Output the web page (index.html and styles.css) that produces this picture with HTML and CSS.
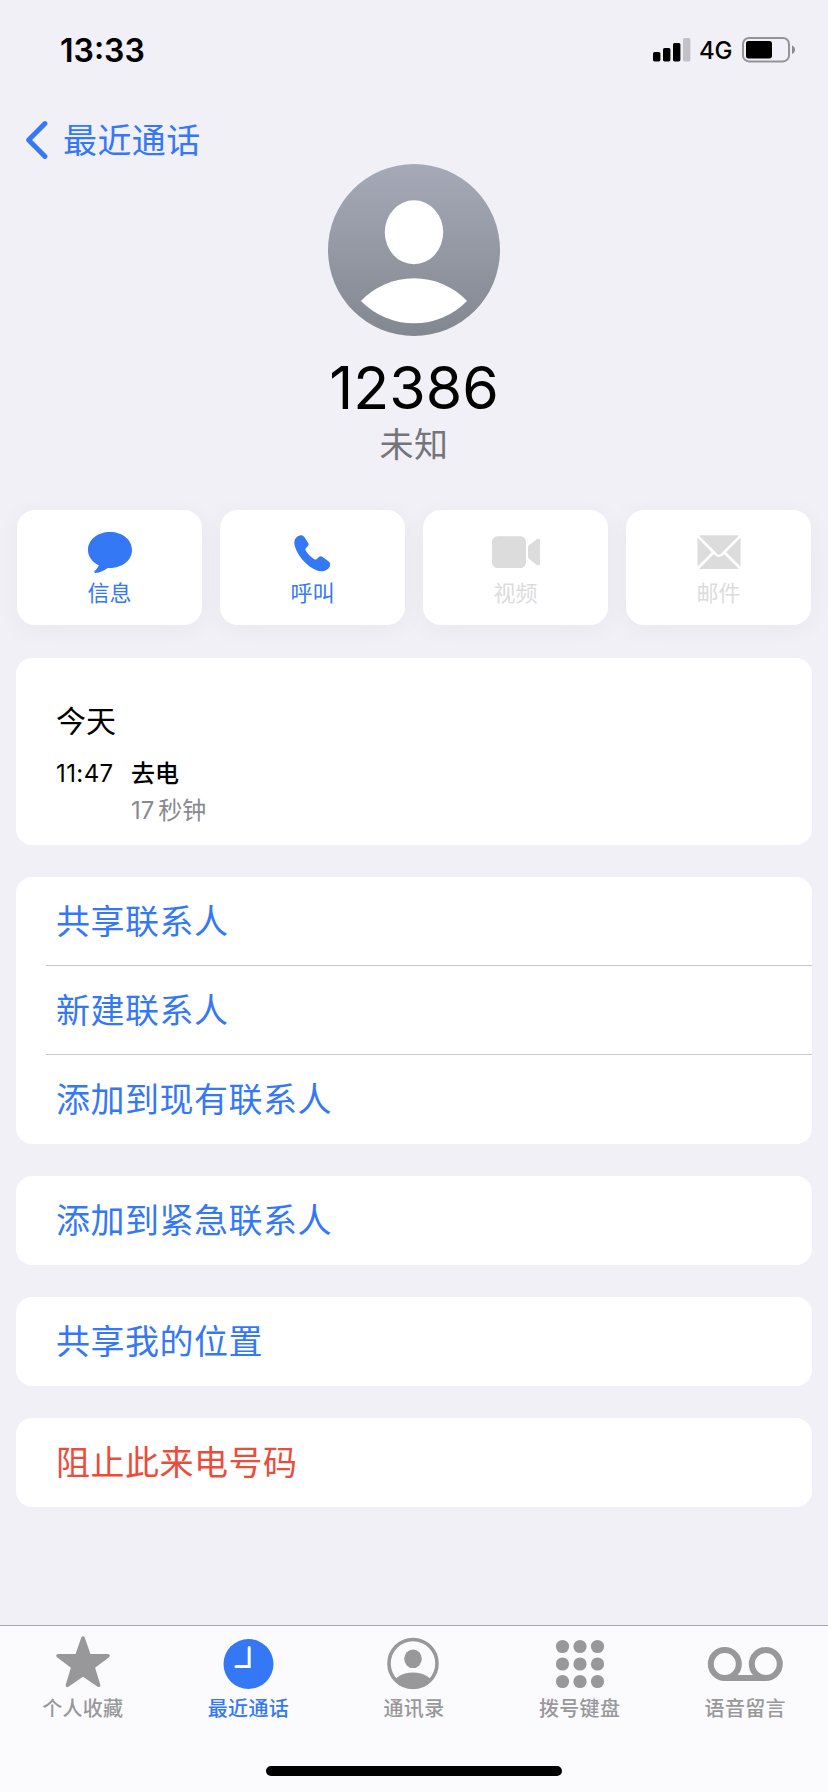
FILE: index.html
```
<!DOCTYPE html>
<html lang="zh-CN">
<head>
    <meta charset="UTF-8">
    <meta name="viewport" content="width=device-width, initial-scale=1.0">
    <title>最近通话</title>
    <link rel="stylesheet" href="styles.css">
</head>
<body>

    <header class="status-bar">
        <span class="time">13:33</span>
        <div class="status-right">
            <svg class="signal" width="38" height="24" viewBox="0 0 38 24">
                <rect x="0" y="14" width="7.4" height="9.4" rx="1.6"/>
                <rect x="10" y="10" width="7.4" height="13.4" rx="1.6"/>
                <rect x="20" y="5" width="7.4" height="18.4" rx="1.6"/>
                <rect x="30" y="0" width="7.4" height="23.4" rx="1.6" fill="#c2c1c7"/>
            </svg>
            <span class="network">4G</span>
            <svg class="battery" width="54" height="26" viewBox="0 0 54 26">
                <rect x="1" y="1" width="46" height="23.4" rx="6" fill="none" stroke="#949398" stroke-width="2"/>
                <rect x="4" y="4" width="26" height="17.4" rx="2.6"/>
                <path d="M50 8.5c4 1.5 4 7 0 8.5z" fill="#8b8a8f"/>
            </svg>
        </div>
    </header>

    <nav class="nav">
        <svg width="24" height="40" viewBox="0 0 24 40">
            <path d="M20 3.6 3.6 20 20 36.4" fill="none" stroke="currentColor" stroke-width="5" stroke-linecap="round" stroke-linejoin="round"/>
        </svg>
        <span>最近通话</span>
    </nav>

    <main>
        <section class="profile">
            <svg class="avatar" width="172" height="172" viewBox="0 0 172 172">
                <defs>
                    <linearGradient id="avatarBg" x1="0" y1="0" x2="0" y2="1">
                        <stop offset="0" stop-color="#a6aab8"/>
                        <stop offset="1" stop-color="#828790"/>
                    </linearGradient>
                </defs>
                <circle cx="86" cy="86" r="86" fill="url(#avatarBg)"/>
                <ellipse cx="86" cy="68.3" rx="29.2" ry="32" fill="#fff"/>
                <path d="M33 137a73 73 0 0 1 106 0a74 74 0 0 1-106 0z" fill="#fff"/>
            </svg>
            <h1>12386</h1>
            <p>未知</p>
        </section>

        <section class="actions">
            <div class="action">
                <svg width="46" height="46" viewBox="0 0 46 46">
                    <path d="M23 2C10.500 2 1 9.800 1 20c0 6.500 4 12 10.800 15.300-.6 2.200-2.300 4-4.200 5.800-.8.900-.2 2 1.200 1.900 4.300-.4 8.500-2.700 12-5.100 13.500 1 24.200-7.100 24.200-17.900C45 9.800 35.500 2 23 2z"/>
                </svg>
                <span>信息</span>
            </div>
            <div class="action">
                <svg width="46" height="46" viewBox="0 0 46 46">
                    <path transform="translate(-.8 -.8)" d="M5.200 14.500C4.400 9.600 8.600 5.600 12.400 6c1.300.2 2 1 2.700 1.900l3.500 5.100c1.200 1.800 1.100 2.600-.1 4.100l-2 2.200c-.5.700-.4 1.300 0 2 1.900 3.300 5.400 6.800 8.700 8.800.8.400 1.400.400 2-.1l2.200-2c1.300-1.100 2.300-1.200 4-.1l5.100 3.600c1.500 1.100 2.500 1.900 2.500 3.500 0 4.200-4.600 7.400-9.300 7C20.500 41 6.500 25.500 5.200 14.500z"/>
                </svg>
                <span>呼叫</span>
            </div>
            <div class="action disabled">
                <svg width="48" height="46" viewBox="1 0 48 46">
                    <rect x="1" y="6.300" width="34" height="31.700" rx="5.500"/>
                    <path d="M37 17.500c0-1.200.4-1.700 1.200-2.400l6.700-5.400c2.100-1.700 4.100-1 4.100 1.200v22.300c0 2.200-2 2.900-4.100 1.200l-6.700-5.400c-.8-.7-1.200-1.200-1.200-2.400z"/>
                </svg>
                <span>视频</span>
            </div>
            <div class="action disabled">
                <svg width="46" height="46" viewBox="0 0 46 46">
                    <g transform="translate(0 -1)">
                        <rect x="1.500" y="6.300" width="43" height="33.600" rx="3.500"/>
                        <path d="M1.500 6.800 18.500 24c3.500 4 5.500 4 9 0L44.500 6.800M1.500 39.500 17.500 23.500M44.500 39.500 28.500 23.500" fill="none" stroke="#fff" stroke-width="2.600"/>
                    </g>
                </svg>
                <span>邮件</span>
            </div>
        </section>

        <section class="card history">
            <h2>今天</h2>
            <div class="call">
                <span class="call-time">11:47</span>
                <div>
                    <div class="call-type">去电</div>
                    <div class="call-length"><span>17</span>秒钟</div>
                </div>
            </div>
        </section>

        <section class="card">
            <div class="row">共享联系人</div>
            <div class="row">新建联系人</div>
            <div class="row">添加到现有联系人</div>
        </section>

        <section class="card">
            <div class="row">添加到紧急联系人</div>
        </section>

        <section class="card">
            <div class="row">共享我的位置</div>
        </section>

        <section class="card">
            <div class="row danger">阻止此来电号码</div>
        </section>
    </main>

    <footer class="tab-bar">
        <div class="tabs">
            <div class="tab">
                <svg width="56" height="56" viewBox="0 0 56 56">
                    <path d="M28 4 34.200 21.800 53 21.800 38 33 43.600 51.300 28 40.400 12.400 51.300 18 33 3 21.800 21.800 21.800z" stroke="currentColor" stroke-width="3.600" stroke-linejoin="round"/>
                </svg>
                <span>个人收藏</span>
            </div>
            <div class="tab active">
                <svg width="56" height="56" viewBox="0 0 56 56">
                    <circle cx="28.500" cy="30" r="25"/>
                    <path d="M29.200 13.500V32.500H16" fill="none" stroke="#fff" stroke-width="3" stroke-linecap="round"/>
                </svg>
                <span>最近通话</span>
            </div>
            <div class="tab">
                <svg width="56" height="56" viewBox="0 0 56 56">
                    <defs>
                        <clipPath id="contactClip"><circle cx="27" cy="29.500" r="24"/></clipPath>
                    </defs>
                    <circle cx="27" cy="29.500" r="24" fill="none" stroke="currentColor" stroke-width="3.600"/>
                    <ellipse cx="27" cy="24.800" rx="8.800" ry="9.300"/>
                    <ellipse cx="27" cy="52" rx="20.500" ry="13.600" clip-path="url(#contactClip)"/>
                </svg>
                <span>通讯录</span>
            </div>
            <div class="tab">
                <svg width="56" height="56" viewBox="0 0 56 56">
                    <circle cx="10.500" cy="12.500" r="6.600"/>
                    <circle cx="28" cy="12.500" r="6.600"/>
                    <circle cx="45.500" cy="12.500" r="6.600"/>
                    <circle cx="10.500" cy="30" r="6.600"/>
                    <circle cx="28" cy="30" r="6.600"/>
                    <circle cx="45.500" cy="30" r="6.600"/>
                    <circle cx="10.500" cy="47.500" r="6.600"/>
                    <circle cx="28" cy="47.500" r="6.600"/>
                    <circle cx="45.500" cy="47.500" r="6.600"/>
                </svg>
                <span>拨号键盘</span>
            </div>
            <div class="tab">
                <svg width="78" height="56" viewBox="0 0 78 56">
                    <g fill="none" stroke="currentColor" stroke-width="6">
                        <circle cx="18.800" cy="30" r="14"/>
                        <circle cx="59.800" cy="30" r="14"/>
                        <path d="M18.800 44h41"/>
                    </g>
                </svg>
                <span>语音留言</span>
            </div>
        </div>
        <div class="home-indicator"></div>
    </footer>

</body>
</html>
```

FILE: styles.css
```
* {
    box-sizing: border-box;
}
body {
    font-family: Inter, "Noto Sans CJK SC", sans-serif;
    margin: 0;
    height: 1792px;
    display: flex;
    flex-direction: column;
    background-color: #f1f0f6;
    color: #000;
}
h1, h2, p {
    margin: 0;
    font-weight: 400;
}
svg {
    display: block;
    fill: currentColor;
}

/* status bar */
.status-bar {
    height: 99px;
    padding: 1px 32px 0 60px;
    display: flex;
    justify-content: space-between;
    align-items: center;
}
.time {
    font-size: 32px;
    font-weight: 600;
}
.status-right {
    display: flex;
    align-items: center;
}
.network {
    margin: 2px 10px 0 8px;
    font-size: 24px;
    font-weight: 450;
    line-height: 28px;
    letter-spacing: -0.4px;
}

/* back link */
.nav {
    height: 65px;
    padding: 16px 0 0 25px;
    display: flex;
    align-items: center;
    gap: 14px;
    color: #3478f6;
    font-size: 34px;
    letter-spacing: 0.4px;
    line-height: 49px;
}
.nav span {
    padding-top: 2px;
}

main {
    flex: 1;
}
.profile {
    display: flex;
    flex-direction: column;
    align-items: center;
}
.profile h1 {
    margin-top: 16px;
    font-size: 59px;
    line-height: 72px;
}
.profile p {
    padding-top: 1px;
    font-size: 34px;
    line-height: 39px;
    letter-spacing: 0.5px;
    color: #757579;
}

/* action buttons */
.actions {
    display: grid;
    grid-template-columns: repeat(4, 1fr);
    gap: 18px;
    margin: 46px 17px 33px;
}
.action {
    height: 115px;
    padding-top: 20px;
    display: flex;
    flex-direction: column;
    align-items: center;
    border-radius: 18px;
    background-color: #fff;
    color: #3478f6;
    font-size: 22px;
    line-height: 35px;
    box-shadow: 0 4px 28px rgba(0, 0, 0, 0.04);
}
.action.disabled {
    color: #dcdcdc;
}

/* cards */
.card {
    margin: 0 16px 32px;
    border-radius: 16px;
    background-color: #fff;
}
.history {
    height: 187px;
    padding: 41px 40px 0;
}
.history h2 {
    font-size: 30px;
    line-height: 44px;
}
.call {
    display: flex;
    margin-top: 12px;
    font-size: 24px;
    line-height: 37px;
}
.call-time {
    width: 75px;
    letter-spacing: 0.4px;
}
.call-type {
    font-weight: 500;
}
.call-length {
    color: #8a8a8e;
}
.call-length span {
    margin-right: 4px;
}
.row {
    height: 89px;
    padding-left: 40px;
    font-size: 34px;
    letter-spacing: 0.5px;
    line-height: 90px;
    color: #3478f6;
}
/* divider starts 30px in from the card edge */
.row + .row {
    margin-left: 30px;
    padding-left: 10px;
}
.row:not(:last-child) {
    background: linear-gradient(#c6c6c8, #c6c6c8) 30px 100% / 100% 1px no-repeat;
}
.row + .row:not(:last-child) {
    background-position: 0 100%;
}
.row.danger {
    color: #eb4d3d;
}

/* tab bar */
.tab-bar {
    height: 167px;
    border-top: 1px solid #a8a8ac;
    background-color: #fbfbfd;
}
.tabs {
    display: grid;
    grid-template-columns: repeat(5, 1fr);
    padding-top: 8px;
    height: 140px;
}
.tab {
    display: flex;
    flex-direction: column;
    align-items: center;
    color: #98989a;
    font-size: 20px;
    font-weight: 500;
    letter-spacing: 0.3px;
    line-height: 39px;
}
.tab.active {
    color: #3478f6;
}
.home-indicator {
    width: 296px;
    height: 10px;
    margin: 0 auto;
    border-radius: 5px;
    background-color: #000;
}
```
